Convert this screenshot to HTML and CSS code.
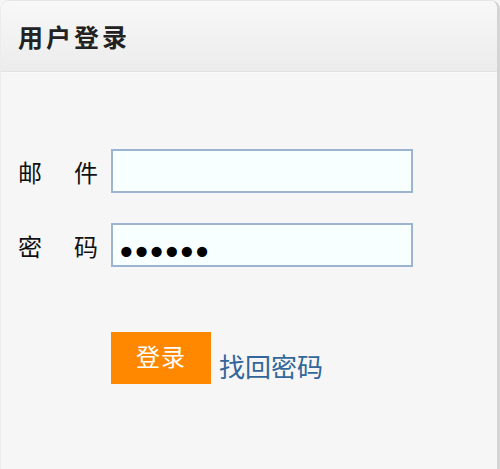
FILE: index.html
```html
<!DOCTYPE html>
<html lang="zh-CN">
<head>
<meta charset="utf-8">
<title>用户登录</title>
<link rel="stylesheet" href="styles.css">
</head>
<body>
<div class="panel">
  <div class="panel-head">用户登录</div>
  <form class="panel-body">
    <div class="row">
      <label class="label"><span>邮</span><span>件</span></label>
      <input class="field" type="text" value="">
    </div>
    <div class="row">
      <label class="label"><span>密</span><span>码</span></label>
      <input class="field pwd" type="password" value="123456">
    </div>
    <div class="actions">
      <button class="btn" type="button">登录</button>
      <a class="link" href="#">找回密码</a>
    </div>
  </form>
</div>
</body>
</html>
```
FILE: styles.css
```css
html, body {
  margin: 0;
  padding: 0;
  background: #f6f6f6;
}
body {
  font-family: "Noto Sans CJK SC", "Noto Sans", sans-serif;
  width: 500px;
  height: 469px;
  overflow: hidden;
}
.panel {
  box-sizing: border-box;
  height: 469px;
  border-right: 3px solid #d4d4d4;
  border-left: 1px solid #ececec;
  border-top: 1px solid #e6e6e6;
  border-radius: 9px 9px 0 0;
  background: #f6f6f6;
  overflow: hidden;
}
.panel-head {
  box-sizing: border-box;
  height: 71px;
  padding-left: 17px;
  display: flex;
  align-items: center;
  font-size: 25px;
  font-weight: bold;
  color: #222;
  letter-spacing: 3px;
  background: linear-gradient(#f8f8f8, #ececec);
  border-bottom: 1px solid #e2e2e2;
  box-shadow: 0 1px 0 #fafafa;
}
.panel-body {
  margin: 0;
  padding: 77px 0 0 17px;
}
.row {
  display: flex;
  align-items: center;
  margin-bottom: 30px;
}
.label {
  width: 80px;
  margin-right: 13px;
  display: flex;
  justify-content: space-between;
  font-size: 24px;
  color: #111;
}
.field {
  box-sizing: border-box;
  width: 302px;
  height: 44px;
  margin: 0;
  padding: 4px 6px 0;
  border: 2px solid #9db4d0;
  background: #f8ffff;
  outline: none;
  font-family: "DejaVu Sans", sans-serif;
  font-size: 18px;
  color: #000;
}
.pwd {
  padding: 15px 3px 0;
  font-size: 35px;
  letter-spacing: -5.5px;
}
.actions {
  display: flex;
  align-items: flex-end;
  margin-top: 65px;
  padding-left: 93px;
}
.btn {
  width: 100px;
  height: 52px;
  margin: 0 8px 0 0;
  padding: 0 0 6px;
  border: none;
  background: #ff8800;
  color: #fff;
  font-family: "Noto Sans CJK SC", sans-serif;
  font-size: 24px;
  letter-spacing: 1px;
  cursor: pointer;
}
.link {
  font-size: 26px;
  line-height: 1;
  margin-bottom: 5px;
  color: #336699;
  text-decoration: none;
}
```
